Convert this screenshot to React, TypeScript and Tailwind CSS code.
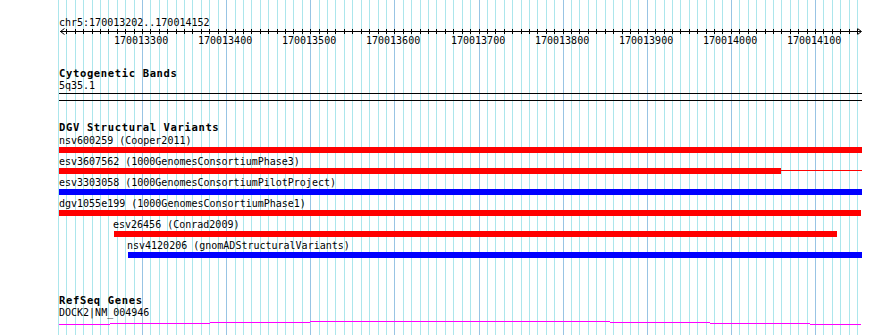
const majorLabels = [
  '170013300',
  '170013400',
  '170013500',
  '170013600',
  '170013700',
  '170013800',
  '170013900',
  '170014000',
  '170014100',
];

// one gridline every 10bp, starting at 170013200
const gridX = (k: number) => Math.round(57.875 + k * 8.4125);
const gridLines = Array.from({ length: 96 }, (_, k) => k);

type Feature = {
  name: string;
  source: string;
  color: 'red' | 'blue';
  left: number;
  right: number;
  tail?: number;
};

const variants: Feature[] = [
  { name: 'nsv600259', source: 'Cooper2011', color: 'red', left: 59, right: 862 },
  { name: 'esv3607562', source: '1000GenomesConsortiumPhase3', color: 'red', left: 59, right: 781, tail: 862 },
  { name: 'esv3303058', source: '1000GenomesConsortiumPilotProject', color: 'blue', left: 59, right: 862 },
  { name: 'dgv1055e199', source: '1000GenomesConsortiumPhase1', color: 'red', left: 59, right: 861 },
  { name: 'esv26456', source: 'Conrad2009', color: 'red', left: 114, right: 837 },
  { name: 'nsv4120206', source: 'gnomADStructuralVariants', color: 'blue', left: 128, right: 862 },
];

// intron line of DOCK2, drawn as a shallow hat
const intron = [
  [59, 110, 5],
  [110, 210, 4],
  [210, 310, 3],
  [310, 610, 2],
  [610, 710, 3],
  [710, 810, 4],
  [810, 861, 5],
];

function TrackLabel({ children }: { children: string }) {
  return (
    <div className="ml-[59px] h-[11px] text-[10.5px] leading-[11px] font-bold tracking-[0.65px] whitespace-nowrap">
      {children}
    </div>
  );
}

function VariantRow({ f, first }: { f: Feature; first: boolean }) {
  const barColor = f.color === 'red' ? 'bg-[#ff0000]' : 'bg-[#0000ff]';
  return (
    <div className={first ? 'mt-[2px]' : 'mt-[3px]'}>
      <div
        className="h-[11px] text-[10px] leading-[11px] whitespace-nowrap"
        style={{ marginLeft: Math.max(59, f.left - 1) }}
      >
        {f.name} ({f.source})
      </div>
      <div className="mt-[1px] flex h-[6px] items-start">
        <div className={`h-[6px] ${barColor}`} style={{ marginLeft: f.left, width: f.right - f.left }} />
        {f.tail && (
          <div className={`mt-[2px] h-[1px] ${barColor}`} style={{ width: f.tail - f.right }} />
        )}
      </div>
    </div>
  );
}

export default function App() {
  return (
    <div
      className="relative h-[335px] w-[890px] overflow-hidden bg-white text-black"
      style={{ fontFamily: '"DejaVu Sans Mono", "Liberation Mono", monospace' }}
    >
      <svg className="pointer-events-none absolute inset-0" width={890} height={335} shapeRendering="crispEdges">
        {gridLines.map((k) => (
          <rect
            key={k}
            x={gridX(k)}
            y={0}
            width={1}
            height={335}
            fill={k % 10 === 0 && k > 0 ? '#98c4e4' : '#ace6ec'}
          />
        ))}
      </svg>

      <div className="relative flex flex-col pt-[17px]">
        <div className="ml-[59px] h-[11px] text-[10px] leading-[11px]">chr5:170013202..170014152</div>

        <svg width={890} height={7} className="block" shapeRendering="crispEdges">
          <rect x={60} y={3} width={801} height={1} fill="#000" />
          {gridLines.slice(1).map((k) => (
            <rect key={k} x={gridX(k)} y={1} width={1} height={5} fill="#000" />
          ))}
          <path d="M64.5 0.5 L60.5 3.5 L64.5 6.5" stroke="#000" fill="none" shapeRendering="auto" />
          <path d="M857.5 0.5 L861.5 3.5 L857.5 6.5" stroke="#000" fill="none" shapeRendering="auto" />
        </svg>

        <div className="relative h-[11px] text-[10px] leading-[11px]">
          {majorLabels.map((label, i) => (
            <span key={label} className="absolute top-0 whitespace-nowrap" style={{ left: gridX((i + 1) * 10) - 28 }}>
              {label}
            </span>
          ))}
        </div>

        <div className="mt-[22px]">
          <TrackLabel>Cytogenetic Bands</TrackLabel>
        </div>
        <div className="ml-[59px] mt-[1px] h-[11px] text-[10px] leading-[11px]">5q35.1</div>
        <div className="ml-[59px] mt-[2px] h-[8px] w-[803px] border-y border-black" />

        <div className="mt-[21px]">
          <TrackLabel>DGV Structural Variants</TrackLabel>
        </div>
        {variants.map((f, i) => (
          <VariantRow key={f.name} f={f} first={i === 0} />
        ))}

        <div className="mt-[37px]">
          <TrackLabel>RefSeq Genes</TrackLabel>
        </div>
        <div className="ml-[59px] mt-[1px] h-[11px] text-[10px] leading-[11px]">DOCK2|NM_004946</div>
        <svg width={890} height={7} className="mt-[1px] block" shapeRendering="crispEdges">
          {intron.map(([x1, x2, y]) => (
            <rect key={x1} x={x1} y={y} width={x2 - x1} height={1} fill="#ff00ff" />
          ))}
        </svg>
      </div>
    </div>
  );
}
